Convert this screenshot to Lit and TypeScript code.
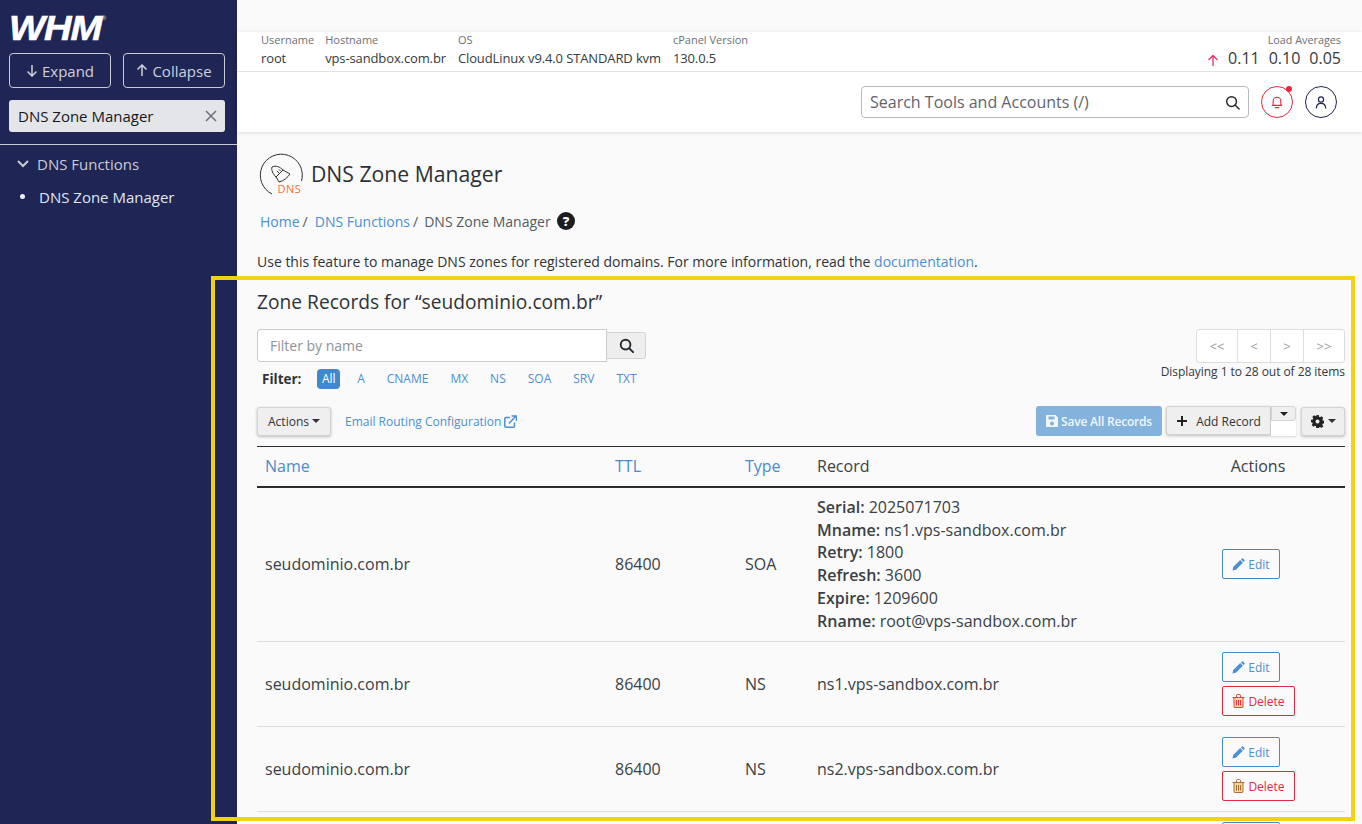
import { LitElement, html, css } from "lit";
import { customElement } from "lit/decorators.js";

const rows = [
  { name: "seudominio.com.br", ttl: "86400", type: "NS", record: "ns1.vps-sandbox.com.br" },
  { name: "seudominio.com.br", ttl: "86400", type: "NS", record: "ns2.vps-sandbox.com.br", dark: true },
  // only the top of this row's Edit button shows above the fold
  { name: "", ttl: "", type: "", record: "" },
];

const searchIcon = (size: number, sw: number) => html`<svg width=${size} height=${size} viewBox="0 0 16 16" fill="none" stroke="currentColor" stroke-width=${sw}><circle cx="7" cy="7" r="5.2"></circle><path d="M11 11l4 4" stroke-linecap="round"></path></svg>`;
const pencil = html`<svg class="ic" width="13" height="13" viewBox="0 0 13 13"><path fill="currentColor" d="M0.5 12.5l.7-3.4 7-7 2.7 2.7-7 7zM9 1.5l1-1q.5-.4 1 0l1.5 1.5q.4.5 0 1l-1 1z"></path></svg>`;
const trash = (dark?: boolean) => html`<svg class="ic" width="13" height="14" viewBox="0 0 13 14"><path fill="#f3d990" d="M2 4h9v9H2z"></path><path fill="none" stroke=${dark ? "#a2602c" : "currentColor"} stroke-width=".9" d="M.5 3.5h12M2 3.5v9.2q0 .8.8.8h7.4q.8 0 .8-.8V3.500M4.500 3.500V1.500q0-1 1-1h2q1 0 1 1v2M4.500 6v5.500M6.500 6v5.500M8.500 6v5.500"></path></svg>`;

@customElement("app-root")
export class AppRoot extends LitElement {
  static styles = css`
    * { box-sizing: border-box; }
    :host {
      display: block;
      width: 1362px;
      height: 824px;
      overflow: hidden;
      position: relative;
      font-family: "Open Sans", sans-serif;
      font-size: 14px;
      color: #2f3338;
      background: #fafafa;
    }
    a { color: #4a90d2; text-decoration: none; }
    .layout { display: flex; height: 824px; }

    .sidebar { width: 237px; flex: none; background: #1f2554; color: #d5d7e0; }
    .logo { height: 53px; padding: 11px 0 0 9px; color: #fff; display: flex; align-items: flex-start; }
    .logo b { font: italic 700 35px/34px "Liberation Sans", sans-serif; letter-spacing: -1px; transform: scaleX(1.09); transform-origin: left; -webkit-text-stroke: .6px #fff; }
    .logo sup { font-size: 6px; line-height: 8px; margin: 3px 0 0 8px; color: #c9cbd6; }
    .side-btns { display: flex; gap: 12px; padding: 0 12px 0 9px; }
    .side-btn { flex: 1; height: 35px; border: 1px solid #c8cad4; border-radius: 4px; display: flex; align-items: center; justify-content: center; gap: 4px; font-size: 15px; color: #cfd1da; }
    .side-search { margin: 12px 12px 0 9px; height: 32px; background: #e4e5e9; border-radius: 3px; display: flex; align-items: center; justify-content: space-between; padding: 0 8px 0 9px; font-size: 15px; color: #16181d; }
    .side-search svg { color: #6d7079; }
    .side-rule { border-top: 1px solid #c8cad4; margin-top: 12px; }
    .side-group { display: flex; align-items: center; gap: 8px; padding: 0 0 0 17px; font-size: 15px; height: 38px; color: #c9cbd6; }
    .side-item { display: flex; align-items: center; padding: 0 0 0 20px; height: 27px; font-size: 15px; color: #dfe6f3; }
    .side-item i { width: 5px; height: 5px; border-radius: 50%; background: #eef0f6; margin-right: 14px; }

    .main { flex: 1; min-width: 0; display: flex; flex-direction: column; }
    .top-gap { height: 32px; }
    .header { height: 100px; background: #fff; box-shadow: 0 1px 4px rgba(0,0,0,.12); flex: none; }
    .stats { height: 40px; border-bottom: 1px solid #e3e3e3; display: flex; padding: 0 21px 0 24px; position: relative; }
    .stat { margin-right: 12px; }
    .stat:first-child { margin-right: 11px; }
    .stat label { display: block; font-size: 11px; line-height: 14px; padding-top: 1px; color: #6a6f76; }
    .stat span { display: block; font-size: 13px; letter-spacing: -.12px; line-height: 20px; padding-top: 1px; color: #343a40; }
    .load { margin-left: auto; text-align: right; }
    .load label { display: block; font-size: 10.800px; line-height: 14px; padding-top: 1px; color: #6a6f76; }
    .load div { display: flex; align-items: center; gap: 9px; font-size: 16px; line-height: 22px; color: #343a40; }
    .load svg { color: #e0336a; margin-top: 4px; margin-right: 0; }
    .tools { display: flex; justify-content: flex-end; align-items: center; gap: 12px; height: 60px; padding-right: 25px; }
    .search { width: 388px; height: 32px; border: 1px solid #b8bac0; border-radius: 4px; display: flex; align-items: center; justify-content: space-between; padding: 0 8px; font-size: 16px; color: #5f646b; }
    .search svg { color: #20272e; }
    .round { width: 32px; height: 32px; border-radius: 50%; border: 1px solid #1f2554; display: flex; align-items: center; justify-content: center; color: #1f2554; position: relative; }
    .round.bell { border-color: #e5283f; color: #e5283f; margin-right: 0; }
    .dot { position: absolute; top: -1px; right: 0; width: 6px; height: 6px; border-radius: 50%; background: #e5283f; }

    .page { flex: 1; padding: 19px 17px 0 20px; min-height: 0; }
    .title { display: flex; align-items: center; height: 44px; margin-left: 2px; gap: 8px; font-size: 21.200px; color: #2c3035; }
    .title svg { margin-top: 4px; }
    .crumbs { display: flex; align-items: center; margin: 14px 0 0 3px; height: 24px; font-size: 14px; color: #555a60; }
    .crumbs a { margin-right: 3px; }
    .crumbs .sep { margin-right: 7px; }
    .crumbs .sep.last { margin-right: 6px; }
    .crumbs svg { margin-left: 6px; }
    .intro { margin-top: 19px; line-height: 20px; font-size: 14px; }
    .zone { font-size: 19.200px; line-height: 26px; margin-top: 17px; color: #2f3338; }

    .controls { display: flex; justify-content: space-between; margin-top: 14px; height: 60px; }
    .filter-box { display: flex; align-items: center; height: 33px; }
    .filter-input { width: 350px; height: 33px; background: #fff; border: 1px solid #ccc; border-radius: 3px 0 0 3px; padding: 0 12px; display: flex; align-items: center; color: #8e9399; font-size: 14px; }
    .filter-btn { width: 39px; height: 27px; background: #eee; border: 1px solid #d4d4d4; border-left: 0; border-radius: 0 3px 3px 0; display: flex; align-items: center; justify-content: center; color: #22282e; }
    .chips { display: flex; align-items: center; margin-top: 6px; height: 22px; font-size: 12px; }
    .chips b { font-size: 13.500px; font-weight: 700; margin: 0 16px 0 5px; }
    .chip { color: #4a90d2; padding: 0 11px; line-height: 20px; }
    .chip.on { background: #3e8acd; color: #fff; border-radius: 4px; padding: 0 4.500px; margin-right: 6px; }
    .pager-wrap { display: flex; flex-direction: column; align-items: flex-end; }
    .pager { display: flex; height: 34px; background: #fff; border: 1px solid #ddd; border-radius: 3px; color: #9a9a9a; font-size: 13px; }
    .pager span { display: flex; align-items: center; justify-content: center; width: 33px; border-left: 1px solid #ddd; }
    .pager span:first-child { width: 40px; border-left: 0; }
    .pager span:last-child { width: 41px; }
    .showing { font-size: 12px; letter-spacing: -.05px; line-height: 18px; margin-top: 0; color: #33383e; }

    .bar { display: flex; align-items: center; margin-top: 17px; height: 30px; }
    .btn { display: flex; align-items: center; justify-content: center; background: #efefef; border: 1px solid #d4d4d4; border-radius: 3px; box-shadow: 0 1px 3px rgba(0,0,0,.25); height: 29px; font-size: 12px; color: #2f3338; }
    .caret { display: inline-block; border: 4px solid transparent; border-top-color: currentColor; border-bottom: 0; margin-left: 3px; }
    .actions { width: 74px; }
    .email { margin-left: 14px; font-size: 12px; display: flex; align-items: center; gap: 3px; }
    .spacer { flex: 1; }
    .save { width: 126px; height: 30px; background: #83b2dc; color: #f1f6fb; border-radius: 3px; display: flex; align-items: center; justify-content: center; gap: 3px; font-size: 12px; font-weight: 600; letter-spacing: -.2px; margin-right: 4px; }
    .add { width: 130px; display: flex; height: 30px; margin-right: 5px; }
    .add .btn { height: 29px; }
    .add-main { width: 105px; gap: 8px; padding-top: 1px; border-radius: 3px 0 0 3px; }
    .add-side { width: 25px; background: #fff; box-shadow: 0 1px 2px rgba(0,0,0,.15); }
    .add-top { height: 15px; background: #efefef; border: 1px solid #d4d4d4; border-radius: 0 3px 3px 0; display: flex; align-items: center; justify-content: center; }
    .add-top .caret { margin: 0; color: #222; }
    .gear { width: 44px; gap: 1px; }

    table { width: 1088px; border-collapse: collapse; margin-top: 10px; table-layout: fixed; font-size: 16px; }
    .c1 { width: 350px; }
    .c2 { width: 130px; }
    .c3 { width: 72px; }
    .c4 { width: 397px; }
    th { height: 40px; text-align: left; font-weight: 400; font-size: 16px; padding: 0 8px; border-top: 1px solid #2c2c2c; border-bottom: 2px solid #2c2c2c; color: #3b4046; }
    th a { color: #4a8ccb; }
    th.right { text-align: center; padding: 0 35px 0 0; }
    td { padding: 0 8px; border-bottom: 1px solid #ddd; color: #3a3f45; }
    .soa td { height: 155px; }
    .soa .rec { line-height: 22.800px; }
    .soa b { font-weight: 600; }
    .ns td { height: 85px; }
    .acts { display: flex; flex-direction: column; align-items: flex-start; gap: 4px; padding-left: 8px; }
    .edit, .del { height: 30px; border-radius: 2px; background: transparent; display: flex; align-items: center; justify-content: center; gap: 3px; font-size: 12px; border: 1px solid; }
    .edit { width: 58px; color: #4a90d2; border-color: #3f8ccf; }
    .del { width: 73px; color: #e5283f; border-color: #e5283f; }

    .frame { position: absolute; left: 211px; top: 276px; width: 1144px; height: 545px; border: 4px solid #f4d115; pointer-events: none; }
  `;

  render() {
    return html`
      <div class="layout">
        <aside class="sidebar">
          <div class="logo"><b>WHM</b><sup>®</sup></div>
          <div class="side-btns">
            <div class="side-btn">
              <svg width="12" height="13" viewBox="0 0 12 13" fill="none" stroke="currentColor" stroke-width="1.500"><path d="M6 1v11M1.500 7.500L6 12l4.500-4.500"></path></svg>
              Expand
            </div>
            <div class="side-btn">
              <svg width="12" height="13" viewBox="0 0 12 13" fill="none" stroke="currentColor" stroke-width="1.500"><path d="M6 12V1M1.500 5.500L6 1l4.500 4.500"></path></svg>
              Collapse
            </div>
          </div>
          <div class="side-search">
            DNS Zone Manager
            <svg width="12" height="12" viewBox="0 0 12 12" stroke="currentColor" stroke-width="1.500"><path d="M1 1l10 10M11 1L1 11"></path></svg>
          </div>
          <div class="side-rule"></div>
          <div class="side-group">
            <svg width="12" height="8" viewBox="0 0 12 8" fill="none" stroke="currentColor" stroke-width="2"><path d="M1 1l5 5 5-5"></path></svg>
            DNS Functions
          </div>
          <div class="side-item"><i></i>DNS Zone Manager</div>
        </aside>

        <div class="main">
          <div class="top-gap"></div>
          <header class="header">
            <div class="stats">
              <div class="stat"><label>Username</label><span>root</span></div>
              <div class="stat"><label>Hostname</label><span>vps-sandbox.com.br</span></div>
              <div class="stat"><label>OS</label><span>CloudLinux v9.4.0 STANDARD kvm</span></div>
              <div class="stat"><label>cPanel Version</label><span>130.0.5</span></div>
              <div class="load">
                <label>Load Averages</label>
                <div>
                  <svg width="12" height="12" viewBox="0 0 12 12" fill="none" stroke="currentColor" stroke-width="1.300"><path d="M6 12V1.500M1.500 6L6 1.500 10.500 6"></path></svg>
                  <span>0.11</span><span>0.10</span><span>0.05</span>
                </div>
              </div>
            </div>
            <div class="tools">
              <div class="search">Search Tools and Accounts (/) ${searchIcon(15, 1.5)}</div>
              <div class="round bell">
                <svg width="12" height="14" viewBox="0 0 14 15" fill="none" stroke="currentColor" stroke-width="1.300"><path d="M2.500 11V6.500a4.500 4.500 0 0 1 9 0V11M1 11.500h12M4.500 14h5"></path></svg>
                <span class="dot"></span>
              </div>
              <div class="round">
                <svg width="12" height="13" viewBox="0 0 14 15" fill="none" stroke="currentColor" stroke-width="1.400"><circle cx="7" cy="4" r="3"></circle><path d="M1.500 14.500c0-4 2-6 5.500-6s5.500 2 5.500 6"></path></svg>
              </div>
            </div>
          </header>

          <div class="page">
            <div class="title">
              <svg width="44" height="44" viewBox="0 0 44 44" fill="none">
                <path d="M13 41A21 21 0 1 1 42.500 28" stroke="#2c3035"></path>
                <path d="M13 14c4-2 8 0 11 3l-7 7c-3-3-5-7-4-10zM24 17l7 4M17 24l3 5M31 21c-2 3-6 7-11 8M18 18l2 2M20 16.500l1.500 1.500" stroke="#2c3035"></path>
                <text x="18.500" y="40" font-family="Open Sans" font-size="11" letter-spacing=".5" fill="#f0703a">DNS</text>
              </svg>
              DNS Zone Manager
            </div>
            <div class="crumbs">
              <a href="#">Home</a><span class="sep">/</span>
              <a href="#">DNS Functions</a><span class="sep last">/</span>
              DNS Zone Manager
              <svg width="18" height="18" viewBox="0 0 18 18"><circle cx="9" cy="9" r="9" fill="#1d1d1f"></circle><text x="9" y="14" text-anchor="middle" font-family="Open Sans" font-weight="800" font-size="13" fill="#fff">?</text></svg>
            </div>
            <div class="intro">Use this feature to manage DNS zones for registered domains. For more information, read the <a href="#">documentation</a>.</div>
            <div class="zone">Zone Records for “seudominio.com.br”</div>

            <div class="controls">
              <div>
                <div class="filter-box">
                  <div class="filter-input">Filter by name</div>
                  <div class="filter-btn">${searchIcon(15, 2)}</div>
                </div>
                <div class="chips">
                  <b>Filter:</b>
                  <span class="chip on">All</span>
                  ${["A", "CNAME", "MX", "NS", "SOA", "SRV", "TXT"].map((c) => html`<span class="chip">${c}</span>`)}
                </div>
              </div>
              <div class="pager-wrap">
                <div class="pager"><span>&lt;&lt;</span><span>&lt;</span><span>&gt;</span><span>&gt;&gt;</span></div>
                <div class="showing">Displaying 1 to 28 out of 28 items</div>
              </div>
            </div>

            <div class="bar">
              <div class="btn actions">Actions<i class="caret"></i></div>
              <a class="email" href="#">Email Routing Configuration
                <svg width="13" height="13" viewBox="0 0 13 13" fill="none" stroke="currentColor" stroke-width="1.500"><path d="M6 2.500H2q-1.200 0-1.200 1.200V11q0 1.200 1.200 1.200h7.300q1.200 0 1.200-1.200V7.500M5 8.500L11.500 1.500M7.500 1h5v5"></path></svg>
              </a>
              <div class="spacer"></div>
              <div class="save">
                <svg width="12" height="12" viewBox="0 0 12 12"><path fill="currentColor" fill-rule="evenodd" d="M1 0h8.500L12 2.500V11q0 1-1 1H1q-1 0-1-1V1q0-1 1-1zM2.500 1.500v3h6v-3zM6 6.500a2 2 0 1 0 0 4 2 2 0 0 0 0-4z"></path></svg>
                Save All Records
              </div>
              <div class="add">
                <div class="btn add-main">
                  <svg width="12" height="12" viewBox="0 0 12 12" stroke="#222" stroke-width="2"><path d="M6 1v10M1 6h10"></path></svg>
                  Add Record
                </div>
                <div class="add-side"><div class="add-top"><i class="caret"></i></div></div>
              </div>
              <div class="btn gear">
                <svg width="13" height="13" viewBox="0 0 13 13"><path fill="#222" fill-rule="evenodd" d="M5.300 0h2.400l.3 1.800 1.100.5 1.500-1 1.700 1.700-1 1.500.5 1.100 1.800.3v2.400l-1.800.3-.5 1.100 1 1.500-1.700 1.700-1.500-1-1.100.5-.3 1.800H5.300L5 11.300l-1.100-.5-1.500 1L.7 10.100l1-1.500-.5-1.100L0 7.200V4.800l1.800-.3.5-1.100-1-1.500L3 .2l1.500 1 1.100-.5zM6.500 4.500a2 2 0 1 0 0 4 2 2 0 0 0 0-4z"></path></svg>
                <i class="caret"></i>
              </div>
            </div>

            <table>
              <colgroup><col class="c1" /><col class="c2" /><col class="c3" /><col class="c4" /><col /></colgroup>
              <thead>
                <tr>
                  <th><a href="#">Name</a></th>
                  <th><a href="#">TTL</a></th>
                  <th><a href="#">Type</a></th>
                  <th>Record</th>
                  <th class="right">Actions</th>
                </tr>
              </thead>
              <tbody>
                <tr class="soa">
                  <td>seudominio.com.br</td>
                  <td>86400</td>
                  <td>SOA</td>
                  <td class="rec">
                    <div><b>Serial:</b> 2025071703</div>
                    <div><b>Mname:</b> ns1.vps-sandbox.com.br</div>
                    <div><b>Retry:</b> 1800</div>
                    <div><b>Refresh:</b> 3600</div>
                    <div><b>Expire:</b> 1209600</div>
                    <div><b>Rname:</b> root@vps-sandbox.com.br</div>
                  </td>
                  <td><div class="acts"><div class="edit">${pencil} Edit</div></div></td>
                </tr>
                ${rows.map((r) => html`
                  <tr class="ns">
                    <td>${r.name}</td>
                    <td>${r.ttl}</td>
                    <td>${r.type}</td>
                    <td>${r.record}</td>
                    <td><div class="acts"><div class="edit">${pencil} Edit</div><div class="del">${trash(r.dark)} Delete</div></div></td>
                  </tr>`)}
              </tbody>
            </table>
          </div>
        </div>
      </div>
      <div class="frame"></div>
    `;
  }
}
